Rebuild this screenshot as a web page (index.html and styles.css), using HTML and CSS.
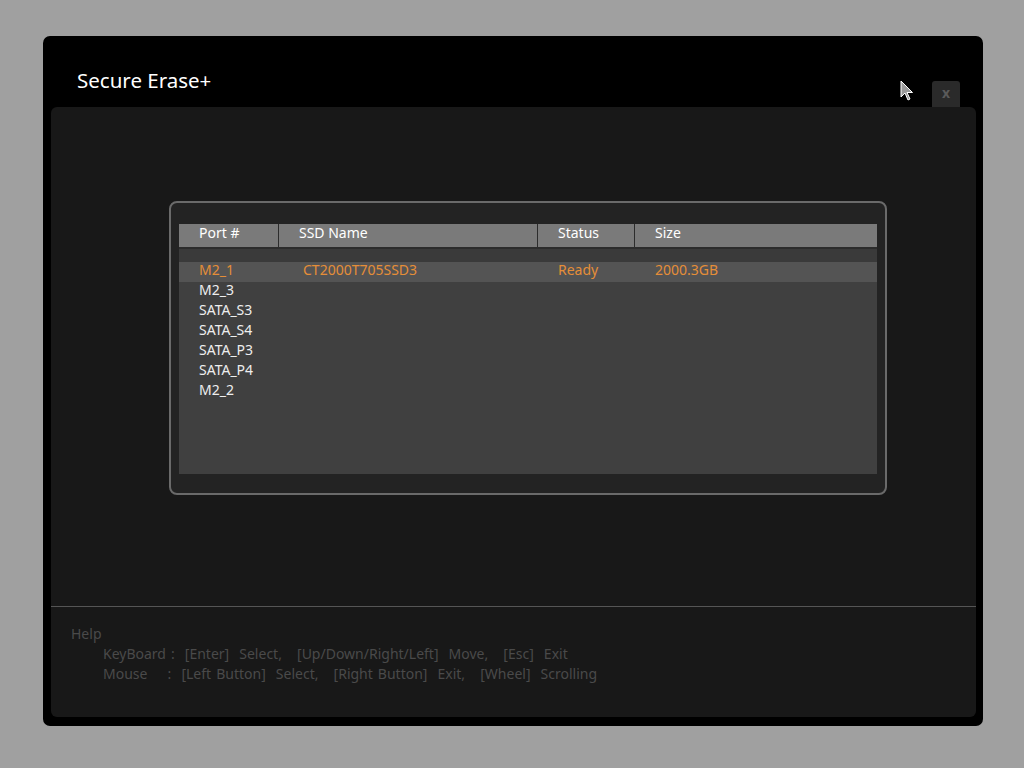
FILE: index.html
```html
<!DOCTYPE html>
<html>
<head>
<meta charset="utf-8">
<title>Secure Erase+</title>
<link rel="stylesheet" href="styles.css">
</head>
<body>
<div class="window">
  <div class="titlebar">
    <div class="title">Secure Erase+</div>
    <div class="close">x</div>
  </div>
  <div class="panel">
    <div class="content">
      <div class="dialog">
        <div class="table">
          <div class="thead">
            <div class="th">Port #</div>
            <div class="th">SSD Name</div>
            <div class="th">Status</div>
            <div class="th last">Size</div>
          </div>
          <div class="tbody">
            <div class="spacer"></div>
            <div class="row selected">
              <div class="td">M2_1</div>
              <div class="td name">CT2000T705SSD3</div>
              <div class="td">Ready</div>
              <div class="td">2000.3GB</div>
            </div>
            <div class="row"><div class="td">M2_3</div><div class="td"></div><div class="td"></div><div class="td"></div></div>
            <div class="row"><div class="td">SATA_S3</div><div class="td"></div><div class="td"></div><div class="td"></div></div>
            <div class="row"><div class="td">SATA_S4</div><div class="td"></div><div class="td"></div><div class="td"></div></div>
            <div class="row"><div class="td">SATA_P3</div><div class="td"></div><div class="td"></div><div class="td"></div></div>
            <div class="row"><div class="td">SATA_P4</div><div class="td"></div><div class="td"></div><div class="td"></div></div>
            <div class="row"><div class="td">M2_2</div><div class="td"></div><div class="td"></div><div class="td"></div></div>
          </div>
        </div>
      </div>
    </div>
    <div class="help">
      <div class="help-title">Help</div>
      <div class="help-line">KeyBoard :  [Enter]  Select,   [Up/Down/Right/Left]  Move,   [Esc]  Exit</div>
      <div class="help-line">Mouse    :  [Left Button]  Select,   [Right Button]  Exit,   [Wheel]  Scrolling</div>
    </div>
  </div>
  <svg class="cursor" width="14" height="22" viewBox="0 0 14 22">
    <path d="M1 1 L1 17 L5 13 L8 20 L10 19 L7 12.5 L12.5 12.5 Z" fill="#9a9a9a" stroke="#ffffff" stroke-width="1"/>
  </svg>
</div>
</body>
</html>
```

FILE: styles.css
```css
html, body {
  margin: 0;
  padding: 0;
  background: #a0a0a0;
  font-family: "Noto Sans", "Open Sans", sans-serif;
}

body {
  padding: 36px 0 0 43px;
  height: 768px;
  box-sizing: border-box;
}

.window {
  position: relative;
  width: 940px;
  height: 690px;
  background: #000;
  border-radius: 7px;
  display: flex;
  flex-direction: column;
  padding: 0 7px 9px 8px;
  box-sizing: border-box;
}

.titlebar {
  height: 71px;
  display: flex;
  justify-content: space-between;
  align-items: flex-end;
  flex-shrink: 0;
}

.title {
  color: #fff;
  font-size: 20.5px;
  line-height: 24px;
  margin: 0 0 15px 26px;
}

.close {
  width: 28px;
  height: 26px;
  margin-right: 16px;
  background: #2a2a2a;
  border-radius: 3px 3px 0 0;
  color: #5a5a5a;
  font-size: 14px;
  font-weight: bold;
  text-align: center;
  line-height: 24px;
}

.panel {
  flex: 1;
  background: #181818;
  border-radius: 6px;
  display: flex;
  flex-direction: column;
}

.content {
  height: 500px;
  border-bottom: 1px solid #555;
  padding: 94px 0 0 118px;
  box-sizing: border-box;
}

.dialog {
  width: 718px;
  height: 294px;
  box-sizing: border-box;
  border: 2px solid #6a6a6a;
  border-radius: 8px;
  background: #232323;
  padding: 21px 8px 19px 8px;
}

.table {
  height: 100%;
  display: flex;
  flex-direction: column;
  background: #404040;
}

.thead {
  display: grid;
  grid-template-columns: 100px 259px 97px 1fr;
  background: #7a7a7a;
  height: 23px;
  border-bottom: 2px solid #2c2c2c;
}

.th {
  color: #fff;
  font-size: 14px;
  line-height: 18px;
  padding-left: 20px;
  border-right: 1px solid #2c2c2c;
}

.th.last {
  border-right: none;
}

.tbody {
  flex: 1;
}

.spacer {
  height: 13px;
  background: #3a3a3a;
}

.row {
  display: grid;
  grid-template-columns: 100px 259px 97px 1fr;
  height: 20px;
  color: #eeeeee;
  font-size: 14px;
  line-height: 15px;
}

.row.selected {
  background: #545454;
  color: #e58e38;
}

.td {
  padding-left: 20px;
}

.td.name {
  padding-left: 24px;
}

.help {
  padding: 17px 0 0 20px;
  color: #4a4a4a;
  font-size: 14px;
  line-height: 20px;
}

.help-line {
  padding-left: 32px;
  white-space: pre;
  word-spacing: 1.4px;
}

.cursor {
  position: absolute;
  left: 857px;
  top: 44px;
}
```
